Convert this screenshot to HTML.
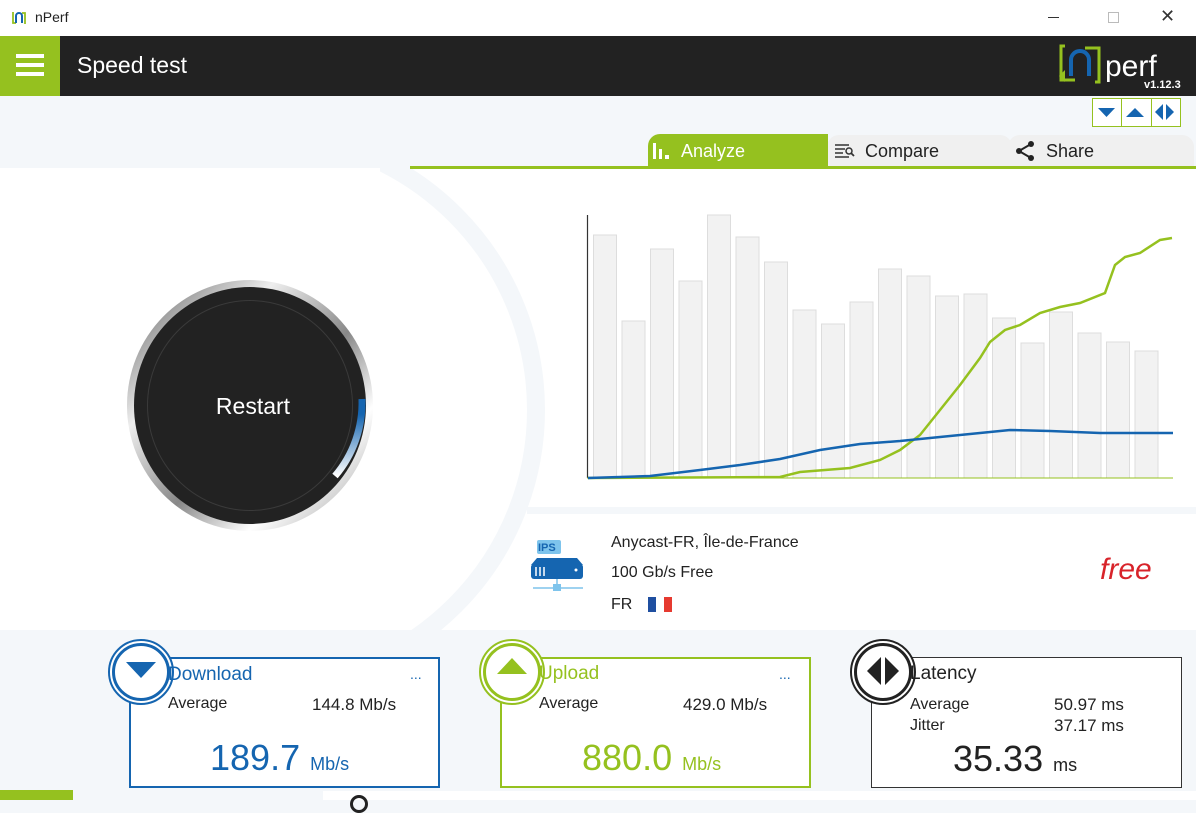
<!DOCTYPE html>
<html><head><meta charset="utf-8"><style>
*{margin:0;padding:0;box-sizing:border-box}
body{width:1196px;height:800px;overflow:hidden;background:#f4f7fa;font-family:"Liberation Sans",sans-serif;position:relative;color:#222}
.a{position:absolute}
.card{position:absolute;background:#fff;border:2px solid}
.circ{position:absolute;width:66px;height:66px;border-radius:50%;background:#fff;border:2px solid}
.lbl{position:absolute;font-size:16px;color:#222}
</style></head><body>
<!-- title bar -->
<div class="a" style="left:0;top:0;width:1196px;height:36px;background:#fff"></div>
<svg class="a" style="left:10px;top:9px" width="18" height="18" viewBox="0 0 18 18"><path d="M3 3v11h3M15 15V4h-3" stroke="#95c11f" stroke-width="1.8" fill="none"/><path d="M6 14V7a3 3 0 0 1 6 0v7" stroke="#1565b0" stroke-width="2" fill="none"/></svg>
<div class="a" style="left:35px;top:9px;font-size:14px">nPerf</div>
<div class="a" style="left:1048px;top:17px;width:11px;height:1px;background:#333"></div>
<div class="a" style="left:1108px;top:12px;width:11px;height:11px;border:1px solid #bbb"></div>
<div class="a" style="left:1160px;top:6px;font-size:18px;color:#333">✕</div>
<!-- header -->
<div class="a" style="left:0;top:36px;width:1196px;height:60px;background:#222"></div>
<div class="a" style="left:0;top:36px;width:60px;height:60px;background:#95c11f"></div>
<div class="a" style="left:16px;top:54px;width:28px;height:4px;background:#fff;box-shadow:0 9px 0 #fff,0 18px 0 #fff"></div>
<div class="a" style="left:77px;top:52px;font-size:23px;color:#fff">Speed test</div>
<svg class="a" style="left:1055px;top:42px" width="130" height="50" viewBox="0 0 130 50">
<path d="M10 4h-4v34h14M40 40h4V6H30" stroke="#95c11f" stroke-width="3" fill="none"/>
<path d="M4 34l6 6 0-12z" fill="#95c11f"/>
<path d="M16 34V18a9 9 0 0 1 18 0v16" stroke="#1565b0" stroke-width="4" fill="none"/>
<text x="50" y="34" fill="#fff" font-size="30" font-family="Liberation Sans">perf</text>
<text x="89" y="46" fill="#fff" font-size="11" font-weight="bold" font-family="Liberation Sans">v1.12.3</text></svg>
<!-- top right buttons -->
<div class="a" style="left:1092px;top:98px;width:89px;height:29px;border:1px solid #95c11f;background:#fff"></div>
<div class="a" style="left:1121px;top:99px;width:1px;height:27px;background:#95c11f"></div>
<div class="a" style="left:1151px;top:99px;width:1px;height:27px;background:#95c11f"></div>
<svg class="a" style="left:1092px;top:98px" width="89" height="29"><path d="M6 10h17l-8.5 9z" fill="#1565b0"/><path d="M34 19h18l-9-9z" fill="#1565b0"/><path d="M71 6v16l-8-8zM74 6v16l8-8z" fill="#1565b0"/></svg>
<!-- tabs -->
<div class="a" style="left:827px;top:135px;width:185px;height:33px;background:#f0f0f0;border-radius:12px 12px 0 0"></div>
<div class="a" style="left:1008px;top:135px;width:186px;height:33px;background:#f0f0f0;border-radius:12px 12px 0 0"></div>
<div class="a" style="left:648px;top:134px;width:180px;height:34px;background:#95c11f;border-radius:12px 0 0 0"></div>
<svg class="a" style="left:652px;top:142px" width="22" height="18"><rect x="1" y="1" width="3" height="16" fill="#fff"/><rect x="7" y="7" width="3" height="10" fill="#fff"/><rect x="13" y="13" width="4" height="4" fill="#fff"/></svg>
<div class="a" style="left:681px;top:141px;font-size:18px;color:#fff">Analyze</div>
<svg class="a" style="left:834px;top:143px" width="22" height="16"><path d="M1 2h14M1 6h10M1 10h8M1 14h14" stroke="#333" stroke-width="1.6"/><circle cx="15" cy="8" r="3" stroke="#333" stroke-width="1.5" fill="none"/><path d="M17 10l3 3" stroke="#333" stroke-width="1.8"/></svg>
<div class="a" style="left:865px;top:141px;font-size:18px">Compare</div>
<svg class="a" style="left:1014px;top:140px" width="22" height="22"><path d="M17 4L5 11l12 7" stroke="#222" stroke-width="2" fill="none"/><circle cx="17" cy="4" r="3" fill="#222"/><circle cx="5" cy="11" r="3" fill="#222"/><circle cx="17" cy="18" r="3" fill="#222"/></svg>
<div class="a" style="left:1046px;top:141px;font-size:18px">Share</div>
<!-- main white panel -->
<div class="a" style="left:0;top:168px;width:1196px;height:462px;background:#fff;overflow:hidden">
<div class="a" style="left:380px;top:0;width:300px;height:462px;overflow:hidden">
<div class="a" style="left:-405px;top:-43px;width:570px;height:570px;border-radius:50%;border:18px solid #f4f7fa"></div>
</div>
<div class="a" style="left:527px;top:339px;width:669px;height:7px;background:#f4f7fa"></div>
</div>
<div class="a" style="left:410px;top:166px;width:786px;height:3px;background:#95c11f"></div>
<!-- gauge -->
<div class="a" style="left:127px;top:280px;width:246px;height:251px;border-radius:50%;background:linear-gradient(135deg,#555,#eee 30%,#888 55%,#fff 75%,#999)"></div>
<div class="a" style="left:134px;top:287px;width:232px;height:237px;border-radius:50%;background:#222"></div>
<div class="a" style="left:147px;top:300px;width:206px;height:211px;border-radius:50%;border:1px solid #3a3a3a"></div>
<svg class="a" style="left:127px;top:280px" width="246" height="251"><path d="M235 119 A110 112 0 0 1 208 196" stroke="url(#g)" stroke-width="7" fill="none"/><defs><linearGradient id="g" x1="0" y1="0" x2="0" y2="1"><stop offset="0.2" stop-color="#1565b0"/><stop offset="1" stop-color="#fff"/></linearGradient></defs></svg>
<div class="a" style="left:127px;top:393px;width:252px;text-align:center;font-size:23px;color:#fff">Restart</div>
<!-- chart -->
<svg class="a" style="left:580px;top:210px" width="600" height="275">
<line x1="7.5" y1="5" x2="7.5" y2="268" stroke="#333" stroke-width="1.2"/>
<g fill="#f2f2f2" stroke="#ddd" stroke-width="1">
<rect x="13.5" y="25" width="23" height="243"/><rect x="42" y="111" width="23" height="157"/><rect x="70.5" y="39" width="23" height="229"/><rect x="99" y="71" width="23" height="197"/><rect x="127.5" y="5" width="23" height="263"/><rect x="156" y="27" width="23" height="241"/><rect x="184.5" y="52" width="23" height="216"/><rect x="213" y="100" width="23" height="168"/><rect x="241.5" y="114" width="23" height="154"/><rect x="270" y="92" width="23" height="176"/><rect x="298.5" y="59" width="23" height="209"/><rect x="327" y="66" width="23" height="202"/><rect x="355.5" y="86" width="23" height="182"/><rect x="384" y="84" width="23" height="184"/><rect x="412.5" y="108" width="23" height="160"/><rect x="441" y="133" width="23" height="135"/><rect x="469.5" y="102" width="23" height="166"/><rect x="498" y="123" width="23" height="145"/><rect x="526.5" y="132" width="23" height="136"/><rect x="555" y="141" width="23" height="127"/></g>
<line x1="7" y1="268" x2="593" y2="268" stroke="#95c11f" stroke-width="1"/>
<polyline fill="none" stroke="#95c11f" stroke-width="2.5" points="8,268 200,267 220,262 270,258 300,250 320,240 340,225 360,200 380,175 400,148 410,132 425,120 440,115 460,103 480,97 500,93 525,83 535,55 545,47 560,43 580,30 592,28"/>
<polyline fill="none" stroke="#1565b0" stroke-width="2.5" points="8,268 70,266 120,260 160,255 200,249 240,240 280,234 320,231 360,227 400,223 430,220 470,221 520,223 593,223"/>
</svg>
<!-- server info -->
<svg class="a" style="left:531px;top:540px" width="56" height="56"><rect x="6" y="0" width="24" height="14" rx="2" fill="#7ec4ec"/><text x="7" y="11" font-size="11" font-weight="bold" fill="#1565b0" font-family="Liberation Sans">IPS</text><path d="M6 18h40l6 7H0z" fill="#1565b0"/><rect x="0" y="24" width="52" height="15" rx="3" fill="#1565b0"/><path d="M5 27v9M9 27v9M13 27v9" stroke="#fff" stroke-width="1.5"/><circle cx="45" cy="30" r="1.5" fill="#fff"/><path d="M26 39v8M2 48h50" stroke="#7ec4ec" stroke-width="1.5"/><rect x="22" y="44" width="8" height="7" fill="#7ec4ec"/></svg>
<div class="a" style="left:611px;top:534px;font-size:16px">Anycast-FR, Île-de-France</div>
<div class="a" style="left:611px;top:564px;font-size:16px">100 Gb/s Free</div>
<div class="a" style="left:611px;top:596px;font-size:16px">FR</div>
<div class="a" style="left:648px;top:597px;width:24px;height:15px;background:linear-gradient(90deg,#1f4fa0 33%,#fff 33%,#fff 66%,#e63a30 66%)"></div>
<div class="a" style="left:1100px;top:553px;font-family:'Liberation Sans',sans-serif;font-style:italic;font-size:30px;color:#d8232a">free</div>
<!-- cards -->
<div class="card" style="left:129px;top:657px;width:311px;height:131px;border-color:#1565b0"></div>
<div class="circ" style="left:108px;top:639px;border-color:#1565b0"></div>
<div class="a" style="left:112px;top:643px;width:58px;height:58px;border-radius:50%;border:3px solid #1565b0;background:#fff"></div>
<svg class="a" style="left:124px;top:660px" width="34" height="20"><path d="M2 2h30L17 18z" fill="#1565b0"/></svg>
<div class="a" style="left:168px;top:664px;font-size:19px;color:#1565b0">Download</div>
<div class="a" style="left:410px;top:666px;font-size:14px;color:#1565b0">...</div>
<div class="lbl" style="left:168px;top:695px">Average</div>
<div class="lbl" style="left:312px;top:695px;font-size:17px">144.8 Mb/s</div>
<div class="a" style="left:210px;top:737px;font-size:36px;color:#1565b0">189.7 <span style="font-size:18px">Mb/s</span></div>

<div class="card" style="left:500px;top:657px;width:311px;height:131px;border-color:#95c11f"></div>
<div class="circ" style="left:479px;top:639px;border-color:#95c11f"></div>
<div class="a" style="left:483px;top:643px;width:58px;height:58px;border-radius:50%;border:3px solid #95c11f;background:#fff"></div>
<svg class="a" style="left:495px;top:656px" width="34" height="20"><path d="M2 18h30L17 2z" fill="#95c11f"/></svg>
<div class="a" style="left:539px;top:663px;font-size:19px;color:#95c11f">Upload</div>
<div class="a" style="left:779px;top:666px;font-size:14px;color:#1565b0">...</div>
<div class="lbl" style="left:539px;top:695px">Average</div>
<div class="lbl" style="left:683px;top:695px;font-size:17px">429.0 Mb/s</div>
<div class="a" style="left:582px;top:737px;font-size:36px;color:#95c11f">880.0 <span style="font-size:18px">Mb/s</span></div>

<div class="card" style="left:871px;top:657px;width:311px;height:131px;border-color:#333;border-width:1.5px"></div>
<div class="circ" style="left:850px;top:639px;border-color:#222"></div>
<div class="a" style="left:854px;top:643px;width:58px;height:58px;border-radius:50%;border:3px solid #222;background:#fff"></div>
<svg class="a" style="left:864px;top:655px" width="38" height="34"><path d="M17 2v28L3 16z M21 2v28l14-14z" fill="#222"/></svg>
<div class="a" style="left:910px;top:663px;font-size:19px">Latency</div>
<div class="lbl" style="left:910px;top:696px">Average</div>
<div class="lbl" style="left:1054px;top:695px;font-size:17px">50.97 ms</div>
<div class="lbl" style="left:910px;top:717px">Jitter</div>
<div class="lbl" style="left:1054px;top:716px;font-size:17px">37.17 ms</div>
<div class="a" style="left:953px;top:738px;font-size:36px">35.33 <span style="font-size:18px">ms</span></div>
<!-- bottom strip -->
<div class="a" style="left:0;top:790px;width:73px;height:10px;background:#95c11f"></div>
<div class="a" style="left:323px;top:791px;width:873px;height:9px;background:#fff"></div>
<div class="a" style="left:350px;top:795px;width:18px;height:18px;border-radius:50%;border:3px solid #222"></div>
</body></html>
